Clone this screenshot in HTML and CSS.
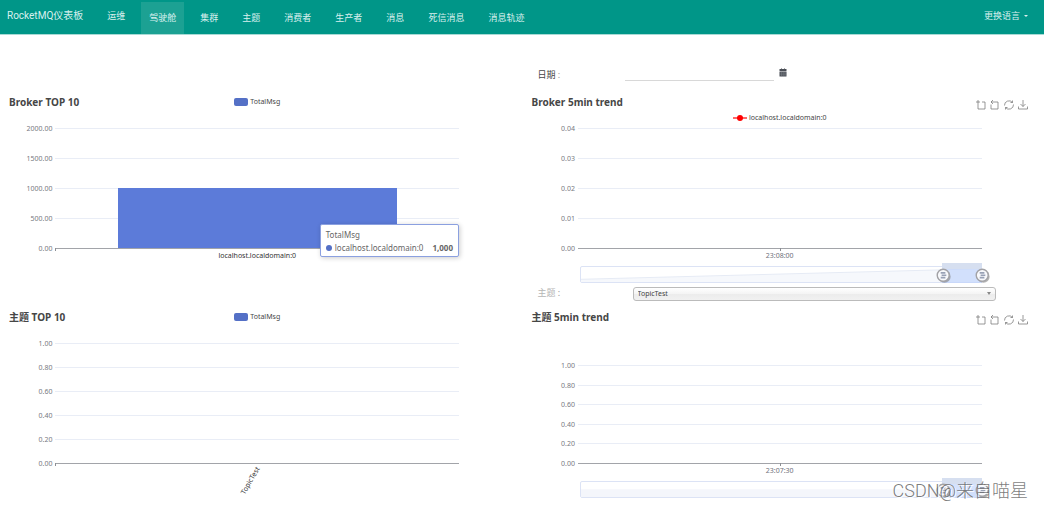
FILE: index.html
```html
<!DOCTYPE html>
<html lang="zh-CN">
<head>
<meta charset="utf-8">
<title>RocketMQ仪表板</title>
<link rel="stylesheet" href="styles.css">
</head>
<body>
<svg class="defs" aria-hidden="true">
  <symbol id="i-zoom" viewBox="0 0 20 20"><path d="M0 4h8M4 0v18h14V4h-6" /></symbol>
  <symbol id="i-back" viewBox="0 0 20 20"><path d="M2 9v9h14V4H2M6 0L2 4l4 4" /></symbol>
  <symbol id="i-restore" viewBox="0 0 20 20"><path d="M1 11a9 9 0 0 1 16-6M19 9a9 9 0 0 1-16 6M17 1v4h-4M3 19v-4h4" /></symbol>
  <symbol id="i-save" viewBox="0 0 20 20"><path d="M1 13v5h18v-5M10 0v13M5 8l5 5 5-5" /></symbol>
  <symbol id="i-handle" viewBox="0 0 16 16"><circle cx="9" cy="9.200" r="6.600" fill="#777" opacity=".55"/><circle cx="7.700" cy="7.700" r="6.400" fill="#f8f9fc" stroke="#a2a2a6" stroke-width="1.500"/><path d="M5 5.200h5M6 7.700h5M5 10.200h5" stroke="#98a1b5" stroke-width="1.800"/></symbol>
</svg>

<header class="navbar">
  <a class="brand" href="#">RocketMQ仪表板</a>
  <nav class="menu">
    <a class="menu-item first" href="#">运维</a>
    <a class="menu-item active" href="#">驾驶舱</a>
    <a class="menu-item" href="#">集群</a>
    <a class="menu-item" href="#">主题</a>
    <a class="menu-item" href="#">消费者</a>
    <a class="menu-item" href="#">生产者</a>
    <a class="menu-item" href="#">消息</a>
    <a class="menu-item" href="#">死信消息</a>
    <a class="menu-item" href="#">消息轨迹</a>
  </nav>
  <button class="language" type="button">更换语言 <span class="caret"></span></button>
</header>

<main class="dashboard">
  <form class="date-row">
    <label class="label" for="date">日期 <span>:</span></label>
    <input class="date-input" id="date" type="text">
    <button class="calendar" type="button" aria-label="日期">
      <svg viewBox="0 0 16 16"><path d="M1 1h3V0h2v1h4V0h2v1h3v4H1zM1 6h14v10H1z" fill="#4a4e56"/><path d="M1 9h14M1 12.500h14M5 6v10M8.500 6v10M12 6v10" stroke="#8f939a" stroke-width=".7"/></svg>
    </button>
  </form>

  <section class="chart broker-top">
    <div class="head">
      <h2 class="title">Broker TOP 10</h2>
      <div class="legend"><i class="swatch"></i>TotalMsg</div>
    </div>
    <ul class="yaxis"><li>2000.00</li><li>1500.00</li><li>1000.00</li><li>500.00</li><li>0.00</li></ul>
    <div class="plot">
      <i></i><i></i><i></i><i></i><i class="base start"></i>
      <div class="bar"></div>
      <div class="tooltip">
        <div>TotalMsg</div>
        <div class="tip-row"><i class="dot"></i>localhost.localdomain:0<b>1,000</b></div>
      </div>
    </div>
    <div class="xaxis category">localhost.localdomain:0</div>
  </section>

  <section class="chart broker-trend">
    <div class="head">
      <h2 class="title">Broker 5min trend</h2>
      <div class="tools">
        <button type="button" aria-label="Zoom"><svg><use href="#i-zoom"/></svg></button>
        <button type="button" aria-label="Zoom reset"><svg><use href="#i-back"/></svg></button>
        <button type="button" aria-label="Restore"><svg><use href="#i-restore"/></svg></button>
        <button type="button" aria-label="Save"><svg><use href="#i-save"/></svg></button>
      </div>
      <div class="legend line"><svg class="marker" viewBox="0 0 14 8"><path d="M0 4h14" stroke="red" stroke-width="1.200"/><circle cx="7" cy="4" r="3" fill="red"/></svg>localhost.localdomain:0</div>
    </div>
    <ul class="yaxis"><li>0.04</li><li>0.03</li><li>0.02</li><li>0.01</li><li>0.00</li></ul>
    <div class="plot"><i></i><i></i><i></i><i></i><i class="base middle"></i></div>
    <div class="xaxis">23:08:00</div>
    <div class="slider">
      <svg class="shadow" viewBox="0 0 100 100" preserveAspectRatio="none"><path d="M0 82L100 12V100H0z" fill="#f6f8fc"/><path d="M0 82L100 12" stroke="#e6ebf5" vector-effect="non-scaling-stroke"/></svg>
      <div class="window"><svg class="handle left"><use href="#i-handle"/></svg><svg class="handle right"><use href="#i-handle"/></svg></div>
    </div>
  </section>

  <form class="topic-row">
    <label class="label muted" for="topic">主题 <span>:</span></label>
    <div class="select-wrap">
      <select class="topic-select" id="topic"><option>TopicTest</option></select>
    </div>
  </form>

  <section class="chart topic-top">
    <div class="head">
      <h2 class="title">主题 TOP 10</h2>
      <div class="legend"><i class="swatch"></i>TotalMsg</div>
    </div>
    <ul class="yaxis"><li>1.00</li><li>0.80</li><li>0.60</li><li>0.40</li><li>0.20</li><li>0.00</li></ul>
    <div class="plot"><i></i><i></i><i></i><i></i><i></i><i class="base start"></i></div>
    <div class="xaxis category"><span class="rotated">TopicTest</span></div>
  </section>

  <section class="chart topic-trend">
    <div class="head tall">
      <h2 class="title">主题 5min trend</h2>
      <div class="tools">
        <button type="button" aria-label="Zoom"><svg><use href="#i-zoom"/></svg></button>
        <button type="button" aria-label="Zoom reset"><svg><use href="#i-back"/></svg></button>
        <button type="button" aria-label="Restore"><svg><use href="#i-restore"/></svg></button>
        <button type="button" aria-label="Save"><svg><use href="#i-save"/></svg></button>
      </div>
    </div>
    <ul class="yaxis"><li>1.00</li><li>0.80</li><li>0.60</li><li>0.40</li><li>0.20</li><li>0.00</li></ul>
    <div class="plot short"><i></i><i></i><i></i><i></i><i></i><i class="base middle"></i></div>
    <div class="xaxis">23:07:30</div>
    <div class="slider">
      <svg class="shadow" viewBox="0 0 100 100" preserveAspectRatio="none"><path d="M0 48H100V100H0z" fill="#f4f6fb"/></svg>
      <div class="window"><svg class="handle left"><use href="#i-handle"/></svg><svg class="handle right"><use href="#i-handle"/></svg></div>
    </div>
  </section>
</main>
<div class="watermark">CSDN@来自喵星</div>
</body>
</html>
```
FILE: styles.css
```css
* { box-sizing: border-box; }

body {
  margin: 0;
  background: #fff;
  color: #464646;
  font-family: "Noto Sans", "Noto Sans CJK SC", sans-serif;
  font-size: 7px;
}

button { padding: 0; border: 0; background: none; color: inherit; font: inherit; }
.defs { display: none; }

.navbar {
  display: flex;
  align-items: stretch;
  height: 35px;
  padding: 0 16px 0 7px;
  gap: 16px;
  background: #009688;
  border-bottom: 1px solid #a8dad5;
  color: #d9f0ee;
  font: 9px/12px Roboto, "Noto Sans CJK SC", sans-serif;
}
.navbar a { color: inherit; text-decoration: none; }
.brand { padding-top: 10px; font-size: 10px; }
.menu { display: flex; gap: 8px; padding-top: 2px; }
.menu-item { padding: 10px 8px 0; }
.menu-item.first { padding-top: 8px; }
.menu-item.active { background: #1ca193; }
.language { display: flex; align-items: center; gap: 4px; margin-left: auto; padding-bottom: 2px; }
.caret { border: 2px solid transparent; border-top-color: currentColor; border-bottom: 0; }

.dashboard {
  display: grid;
  grid-template-columns: 1fr 1fr;
  column-gap: 18px;
  padding: 0 12px 0 5px;
}
.date-row, .topic-row { grid-column: 2; display: flex; padding-left: 10px; }
.date-row { height: 60px; padding-top: 33px; }
.topic-row { padding-top: 4px; padding-bottom: 9px; padding-right: 36px; }
.label { width: 95px; font-size: 9px; line-height: 12px; }
.date-row .label { width: 87px; line-height: 14px; }
.label span { color: #999; }
.label.muted { color: #b5b5b5; }
.date-input {
  width: 149px;
  height: 13px;
  padding: 0;
  border: 0;
  border-bottom: 1px solid #d8d8d8;
  background: none;
  font: inherit;
  outline: 0;
}
.calendar { width: 8px; height: 9px; margin-left: 5px; }
.calendar svg { display: block; width: 8px; height: 9px; }

.select-wrap { position: relative; flex: 1; }
.select-wrap::after {
  content: "";
  position: absolute;
  right: 5px;
  top: 5px;
  border: 2px solid transparent;
  border-top: 3px solid #888;
  border-bottom: 0;
}
.topic-select {
  display: block;
  appearance: none;
  width: 100%;
  height: 14px;
  padding: 0 4px 1px;
  border: 1px solid #bbb;
  border-radius: 3px;
  background: linear-gradient(#fff, #f4f4f4 50%, #ececec 52%, #f1f1f1);
  color: #444;
  font: inherit;
}

.chart { display: grid; grid-template-columns: 10% 80% 10%; align-content: start; }
.broker-top, .topic-top { grid-column: 1; }
.head {
  grid-column: 1 / -1;
  display: grid;
  grid-template-columns: 1fr auto 1fr;
  grid-template-rows: 15px 14px;
  height: 33px;
  padding: 0 4px;
}
.head.tall { height: 55px; }
.title { margin: 0; font-size: 10px; line-height: 15px; white-space: nowrap; }
.legend { grid-column: 2; display: flex; align-items: center; gap: 2px; height: 14px; line-height: 14px; }
.legend.line { grid-row: 2; height: 15px; }
.swatch { width: 14px; height: 8px; border-radius: 2px; background: #5470c6; }
.marker { width: 14px; height: 8px; }
.tools { grid-column: 3; display: flex; justify-content: flex-end; gap: 4px; padding-top: 4px; }
.tools svg { display: block; width: 10px; height: 10px; fill: none; stroke: #777; stroke-width: 1.5; }

.yaxis {
  grid-column: 1;
  display: flex;
  flex-direction: column;
  justify-content: space-between;
  margin: 0;
  padding: 0 3px 0 0;
  list-style: none;
  color: #777a82;
  line-height: 1px;
  text-align: right;
}
.plot {
  position: relative;
  display: flex;
  flex-direction: column;
  justify-content: space-between;
  height: 121px;
}
.plot.short { height: 99px; }
.plot > i { height: 1px; background: #e9edf6; }
.plot > .base { position: relative; background: #a2a4a9; }
.base::after { content: ""; position: absolute; top: 0; width: 1px; height: 3px; background: #8c8e94; }
.base.start::after { left: 0; }
.base.middle::after { left: 50%; }
.bar { position: absolute; left: 15.6%; bottom: 1px; width: 69%; height: 50%; background: #5c7bd9; }
.tooltip {
  position: absolute;
  right: 0;
  bottom: -8px;
  padding: 3px 5px 2px;
  border: 1px solid #8ba0e0;
  border-radius: 2px;
  background: #fff;
  box-shadow: 1px 1px 5px rgba(0, 0, 0, .2);
  color: #666;
  font-size: 8px;
  line-height: 13px;
  white-space: nowrap;
}
.tip-row { display: flex; align-items: center; }
.dot { width: 6px; height: 6px; margin-right: 3px; border-radius: 50%; background: #5470c6; }
.tip-row b { margin-left: 9px; }
.xaxis { grid-column: 2; padding-top: 2px; color: #6e7079; line-height: 9px; text-align: center; }
.xaxis.category { color: #333; }
.rotated { display: inline-block; margin-top: 10px; margin-right: 14px; transform: rotate(-60deg); }

.slider { grid-column: 2; position: relative; height: 17px; margin-top: 6px; margin-left: 2px; border: 1px solid #dce3f5; border-radius: 2px; }
.shadow { display: block; width: 100%; height: 15px; fill: none; }
.window {
  position: absolute;
  right: -1px;
  top: -4px;
  bottom: -1px;
  width: 10%;
  border-top: 6px solid #d6dff0;
  background: rgba(190, 210, 252, .65);
}
.handle { position: absolute; top: -1px; width: 15px; height: 15px; }
.handle.left { left: -6px; }
.handle.right { right: -8px; }

.watermark {
  position: absolute;
  right: 16px;
  bottom: 5px;
  color: rgba(90, 90, 90, .8);
  font-family: Roboto, "Noto Sans CJK SC", sans-serif;
  font-size: 18px;
  font-weight: 300;
  line-height: 26px;
  text-shadow: 1px 1px #fff;
}
```
